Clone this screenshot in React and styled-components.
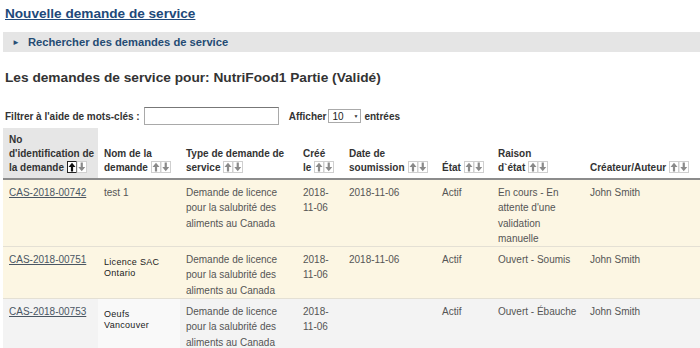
import React from 'react';
import styled, { createGlobalStyle } from 'styled-components';

const GlobalStyle = createGlobalStyle`
  body {
    margin: 0;
    background: #fff;
    font-family: "Liberation Sans", Arial, sans-serif;
  }
`;

const columns = [
  { key: 'id', label: ['No', "d'identification de", 'la demande'], width: 95, active: true },
  { key: 'name', label: ['Nom de la', 'demande'], width: 82 },
  { key: 'type', label: ['Type de demande de', 'service'], width: 117 },
  { key: 'created', label: ['Créé', 'le'], width: 46 },
  { key: 'submitted', label: ['Date de', 'soumission'], width: 93 },
  { key: 'state', label: ['État'], width: 56 },
  { key: 'reason', label: ['Raison', 'd`état'], width: 92 },
  { key: 'author', label: ['Créateur/Auteur'], width: 116 },
];

const rows = [
  {
    id: 'CAS-2018-00742',
    name: 'test 1',
    type: 'Demande de licence pour la salubrité des aliments au Canada',
    created: '2018-11-06',
    submitted: '2018-11-06',
    state: 'Actif',
    reason: "En cours - En attente d'une validation manuelle",
    author: 'John Smith',
    tone: 'cream',
  },
  {
    id: 'CAS-2018-00751',
    name: ['Licence SAC', 'Ontario'],
    type: 'Demande de licence pour la salubrité des aliments au Canada',
    created: '2018-11-06',
    submitted: '2018-11-06',
    state: 'Actif',
    reason: 'Ouvert - Soumis',
    author: 'John Smith',
    tone: 'cream',
    customName: true,
  },
  {
    id: 'CAS-2018-00753',
    name: ['Oeufs', 'Vancouver'],
    type: 'Demande de licence pour la salubrité des aliments au Canada',
    created: '2018-11-06',
    submitted: '',
    state: 'Actif',
    reason: 'Ouvert - Ébauche',
    author: 'John Smith',
    tone: 'grey',
    customName: true,
  },
];

const SortIcons = ({ active }) => (
  <SortBox width="20" height="12" viewBox="0 0 20 12">
    <rect x="0.5" y="0.5" width="9" height="11" fill="#fff" stroke={active ? '#222' : '#cfcfcf'} />
    <path d="M5 1.8 L1.5 6 L3.9 6 L3.9 10.4 L6.1 10.4 L6.1 6 L8.5 6 Z" fill={active ? '#111' : '#8a8a8a'} />
    <rect x="10" y="0.5" width="9.5" height="11" fill="#fff" stroke="#cfcfcf" />
    <path d="M14.75 10.2 L11.3 6 L13.65 6 L13.65 1.6 L15.85 1.6 L15.85 6 L18.2 6 Z" fill="#8a8a8a" />
  </SortBox>
);

const App = () => {
  return (
    <Page>
      <GlobalStyle />
      <TitleLink href="#">Nouvelle demande de service</TitleLink>
      <SearchBar>
        <Triangle>►</Triangle>
        Rechercher des demandes de service
      </SearchBar>
      <Heading>Les demandes de service pour: NutriFood1 Partie (Validé)</Heading>
      <FilterRow>
        <FilterLabel>Filtrer à l'aide de mots-clés :</FilterLabel>
        <SearchInput />
        <FilterLabel>Afficher</FilterLabel>
        <Select>
          10
          <Caret>▼</Caret>
        </Select>
        <FilterLabel>entrées</FilterLabel>
      </FilterRow>
      <Table>
        <colgroup>
          {columns.map((c) => (
            <col key={c.key} style={{ width: c.width }} />
          ))}
        </colgroup>
        <thead>
          <tr>
            {columns.map((c) => (
              <HeadCell key={c.key} $active={c.active}>
                {c.label.map((line, i) => (
                  <React.Fragment key={i}>
                    {line}
                    {i === c.label.length - 1 ? <SortIcons active={c.active} /> : <br />}
                  </React.Fragment>
                ))}
              </HeadCell>
            ))}
          </tr>
        </thead>
        <tbody>
          {rows.map((r) => (
            <Row key={r.id} $tone={r.tone}>
              <Cell>
                <IdLink href="#">{r.id}</IdLink>
              </Cell>
              {r.customName ? (
                <NameCell $tone={r.tone}>
                  {r.name[0]}
                  <br />
                  {r.name[1]}
                </NameCell>
              ) : (
                <Cell>{r.name}</Cell>
              )}
              <Cell>{r.type}</Cell>
              <Cell>{r.created}</Cell>
              <Cell>{r.submitted}</Cell>
              <Cell>{r.state}</Cell>
              <Cell>{r.reason}</Cell>
              <Cell>{r.author}</Cell>
            </Row>
          ))}
        </tbody>
      </Table>
    </Page>
  );
};

export default App;

const Page = styled.div`
  width: 700px;
  height: 348px;
  overflow: hidden;
  padding-left: 3px;
  box-sizing: border-box;
`;

const TitleLink = styled.a`
  display: inline-block;
  margin: 5px 0 0 2px;
  font-size: 13.6px;
  line-height: 18px;
  font-weight: bold;
  color: #21497a;
  text-decoration: underline;
`;

const SearchBar = styled.div`
  display: flex;
  align-items: center;
  height: 20px;
  margin-top: 9px;
  padding-left: 9px;
  background: #e5e5e5;
  font-size: 11.2px;
  font-weight: bold;
  color: #244b73;
`;

const Triangle = styled.span`
  font-size: 8px;
  margin-right: 8px;
  color: #2a4f77;
`;

const Heading = styled.h2`
  margin: 17px 0 0 2px;
  font-size: 13.7px;
  line-height: 18px;
  font-weight: bold;
  color: #333;
`;

const FilterRow = styled.div`
  display: flex;
  align-items: center;
  margin: 20px 0 0 2px;
  height: 18px;
`;

const FilterLabel = styled.span`
  font-size: 10px;
  font-weight: bold;
  color: #333;
`;

const SearchInput = styled.div`
  width: 133px;
  height: 16px;
  margin: 0 10px 0 4px;
  border: 1px solid #a9a9a9;
  border-top-color: #777;
  background: #fff;
`;

const Select = styled.div`
  display: flex;
  align-items: center;
  justify-content: space-between;
  width: 26px;
  height: 12px;
  margin: 0 3px 0 2px;
  padding: 0 2px 0 3px;
  border: 1px solid #aaa;
  box-sizing: content-box;
  font-size: 10px;
  color: #222;
`;

const Caret = styled.span`
  font-size: 5px;
  color: #333;
`;

const Table = styled.table`
  width: 697px;
  margin-top: 3px;
  border-collapse: collapse;
  table-layout: fixed;
`;

const HeadCell = styled.th`
  padding: 5px 2px 3px 6px;
  vertical-align: bottom;
  text-align: left;
  font-size: 10px;
  line-height: 14px;
  font-weight: bold;
  color: #333;
  white-space: nowrap;
  background: ${(p) => (p.$active ? '#e6e6e6' : '#fff')};
  border-bottom: 2px solid #8c8c8c;
`;

const SortBox = styled.svg`
  display: inline-block;
  vertical-align: -2px;
  margin-left: 3px;
`;

const Row = styled.tr`
  background: ${(p) => (p.$tone === 'cream' ? '#fcf6e3' : '#f3f3f3')};
  border-bottom: 1px solid #e4e0d4;
`;

const Cell = styled.td`
  padding: 5px 6px 0;
  vertical-align: top;
  font-size: 10px;
  line-height: 15.3px;
  color: #555;
`;

const NameCell = styled(Cell)`
  padding-top: 10px;
  font-size: 9px;
  line-height: 11px;
  letter-spacing: 0.3px;
  color: #1a1a1a;
  background: ${(p) => (p.$tone === 'grey' ? '#f9f9f9' : 'transparent')};
`;

const IdLink = styled.a`
  color: #4a5663;
  text-decoration: underline;
`;
